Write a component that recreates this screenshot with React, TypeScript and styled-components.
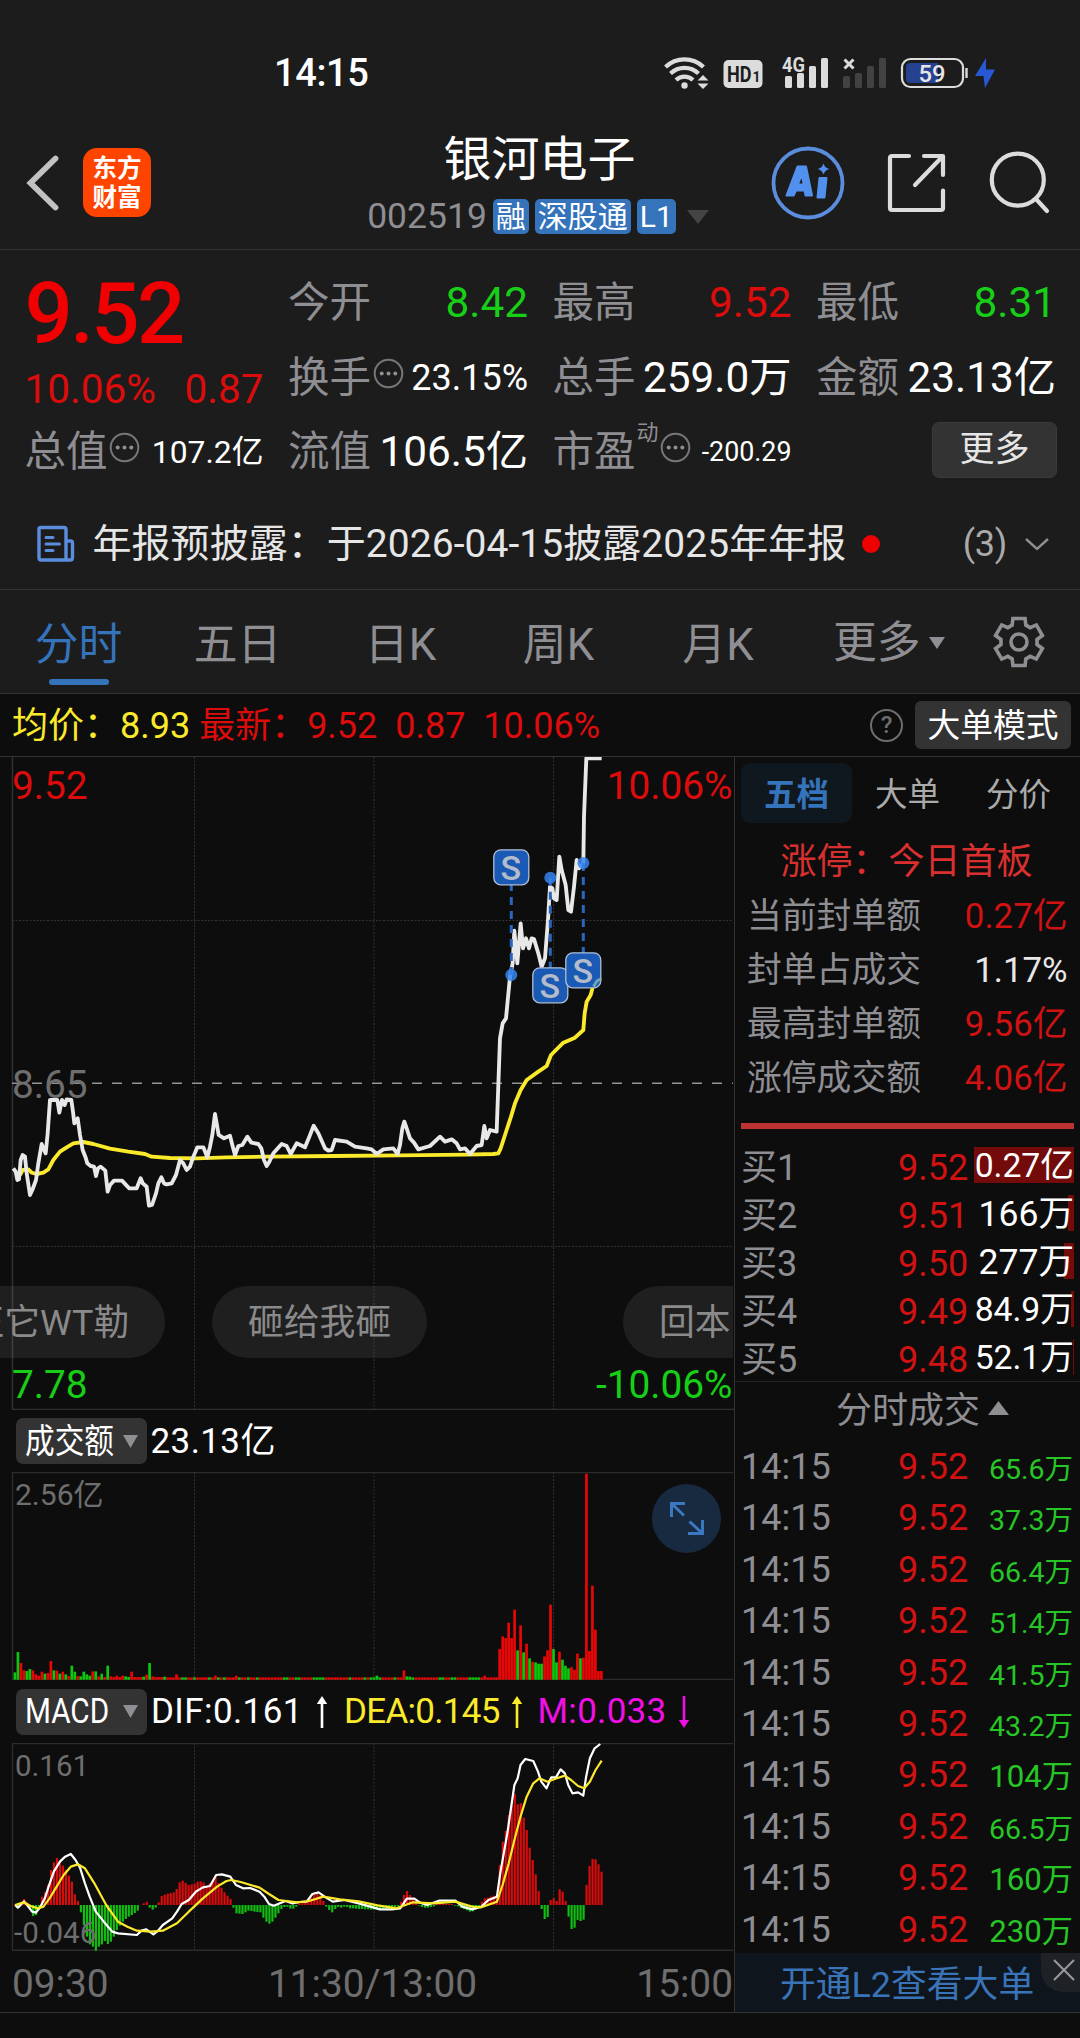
import React from 'react';
import styled, { createGlobalStyle, css } from 'styled-components';

const color = {
  panel: '#1c1c1c',
  page: '#0d0d0d',
  line: '#333333',
  grey: '#8e8e93',
  dim: '#6e6e6e',
  red: '#dc0c0c',
  green: '#17cf17',
  blue: '#3573bb',
  yellow: '#fbea2b',
  magenta: '#f010e4',
};

const GlobalStyle = createGlobalStyle`
  * { box-sizing: border-box; }
  body {
    margin: 0;
    background: ${color.page};
    color: #fff;
    font-family: Roboto, "Noto Sans CJK SC", sans-serif;
    -webkit-font-smoothing: antialiased;
  }
`;

const Screen = styled.div`
  width: 1080px;
  height: 2038px;
  overflow: hidden;
  background: ${color.page};
`;

/* ---------- status bar and header ---------- */

const StatusBar = styled.div`
  display: flex;
  align-items: center;
  justify-content: space-between;
  height: 110px;
  padding: 35px 84px 0 274px;
  background: ${color.panel};
`;
const Clock = styled.div`
  font-size: 38px;
  line-height: 40px;
  font-weight: 500;
  letter-spacing: -0.4px;
`;

const Header = styled.header`
  display: grid;
  grid-template-columns: 360px 1fr 360px;
  height: 140px;
  padding-bottom: 1px;
  background: ${color.panel};
  border-bottom: 1px solid ${color.line};
`;
const HeaderSide = styled.div<{ $end?: boolean }>`
  display: flex;
  align-items: center;
  height: 145px;
  ${(p) => (p.$end ? 'padding-left: 50px; gap: 40px;' : 'padding-left: 25px; gap: 22px;')}
`;
const AppLogo = styled.div`
  display: grid;
  place-content: center;
  width: 68px;
  height: 69px;
  border-radius: 14px;
  background: #ff4400;
  font-size: 24.5px;
  line-height: 29px;
  font-weight: 700;
`;
const TitleBlock = styled.div`
  display: flex;
  flex-direction: column;
  align-items: center;
  padding-top: 22px;
`;
const StockName = styled.h1`
  margin: 0 1px 0 0;
  font-size: 48px;
  line-height: 56px;
  font-weight: 400;
`;
const CodeLine = styled.div`
  display: flex;
  align-items: center;
  gap: 6px;
  margin: 10px 0 0 -4px;
  height: 37px;
  svg {
    margin-left: 5px;
  }
`;
const Code = styled.span`
  font-size: 35.5px;
  line-height: 37px;
  color: ${color.grey};
`;
const Badge = styled.span`
  height: 35px;
  padding: 0 3px;
  border-radius: 5px;
  background: ${color.blue};
  font-size: 30px;
  line-height: 36px;
`;

/* ---------- quote summary ---------- */

const Quote = styled.section`
  display: grid;
  grid-template-columns: 239px 240px 239px 240px;
  grid-template-rows: 75px 75px 73px;
  column-gap: 24.5px;
  height: 224px;
  padding: 15px 0 0 24.5px;
  background: ${color.panel};
`;
const PriceCell = styled.div`
  grid-row: span 2;
`;
const BigPrice = styled.div`
  font-size: 85px;
  line-height: 98px;
  font-weight: 500;
  color: #f00000;
  letter-spacing: -2.6px;
`;
const Change = styled.div`
  display: flex;
  justify-content: space-between;
  font-size: 40.5px;
  line-height: 52px;
  color: ${color.red};
`;
const Cell = styled.div`
  display: flex;
  align-items: center;
  height: 100%;
`;
const Label = styled.span`
  font-size: 41.5px;
  line-height: 60px;
  color: ${color.grey};
  sup {
    margin-left: 1px;
    font-size: 22px;
    line-height: 0;
    vertical-align: 26px;
  }
`;
const Value = styled.span<{ $size?: number; $tone?: string }>`
  margin-left: auto;
  font-size: ${(p) => p.$size ?? 42.3}px;
  line-height: 60px;
  color: ${(p) => p.$tone ?? '#fff'};
  white-space: nowrap;
`;
const MoreButton = styled.button`
  margin: -4px -1px 0 auto;
  width: 125px;
  height: 56px;
  padding: 0;
  border: 1px solid #3a3a3a;
  border-radius: 7px;
  background: #333;
  color: #e6e6e6;
  font: 35px/54px Roboto, 'Noto Sans CJK SC', sans-serif;
`;

const News = styled.section`
  display: flex;
  align-items: center;
  height: 116px;
  padding: 24px 30px 0 35.5px;
  background: ${color.panel};
  border-bottom: 1px solid ${color.line};
  color: #e6e6e6;
  font-size: 39px;
  line-height: 62px;
  white-space: nowrap;
`;
const NewsText = styled.span`
  margin-left: 18px;
  letter-spacing: 0.05px;
`;
const UnreadDot = styled.i`
  width: 18px;
  height: 18px;
  margin-left: 16px;
  border-radius: 50%;
  background: #f00000;
`;
const Count = styled.span`
  margin: 0 17px 0 auto;
  font-size: 36px;
  letter-spacing: -0.3px;
  color: #aaa;
`;

/* ---------- period tabs ---------- */

const Tabs = styled.nav`
  display: flex;
  height: 104px;
  background: ${color.panel};
  border-bottom: 1px solid ${color.line};
`;
const Tab = styled.div<{ $w: number; $active?: boolean }>`
  display: flex;
  flex-direction: column;
  align-items: center;
  width: ${(p) => p.$w}px;
  padding-top: 25px;
  padding-right: 1px;
  font-size: 43.8px;
  line-height: 60px;
  color: ${(p) => (p.$active ? color.blue : color.grey)};
  ${(p) =>
    p.$active &&
    css`
      &::after {
        content: '';
        width: 60px;
        height: 6px;
        margin: 4px 0 0 1px;
        border-radius: 3px;
        background: ${color.blue};
      }
    `}
`;
const MoreTab = styled.div`
  display: flex;
  align-items: center;
  gap: 8px;
  width: 189px;
  padding: 2px 0 0 30px;
  font-size: 43.8px;
  line-height: 62px;
  color: ${color.grey};
`;
const GearBox = styled.div`
  display: flex;
  align-items: center;
`;

/* ---------- average / latest strip ---------- */

const InfoStrip = styled.div`
  display: flex;
  align-items: center;
  height: 63px;
  padding: 0 9px 0 12px;
  border-bottom: 1px solid ${color.line};
  font-size: 36px;
  line-height: 60px;
  white-space: pre;
  color: ${color.red};
  b {
    font-weight: 400;
    color: ${color.yellow};
  }
  > b,
  > b + span {
    padding-top: 2px;
  }
`;
const HelpIcon = styled.span`
  display: grid;
  place-items: center;
  width: 33px;
  height: 33px;
  margin-left: auto;
  border: 2.5px solid ${color.dim};
  border-radius: 50%;
  color: ${color.dim};
  font-size: 24px;
  line-height: 28px;
  font-weight: 500;
`;
const ModeButton = styled.span`
  width: 156px;
  height: 48px;
  margin-left: 12px;
  border-radius: 6px;
  background: #333;
  color: #fff;
  font-size: 32.8px;
  line-height: 50px;
  text-align: center;
`;

/* ---------- main area ---------- */

const Main = styled.main`
  display: grid;
  grid-template-columns: 734px 346px;
  height: 1256px;
  border-bottom: 1px solid ${color.line};
`;
const Charts = styled.div`
  display: flex;
  flex-direction: column;
`;
const Plot = styled.div<{ $h: number }>`
  position: relative;
  height: ${(p) => p.$h}px;
  overflow: hidden;
  svg {
    display: block;
  }
`;
const ScaleLabel = styled.span<{ $size: number; $tone: string }>`
  position: absolute;
  font-size: ${(p) => p.$size}px;
  line-height: 44px;
  color: ${(p) => p.$tone};
`;
const TopLeft = styled(ScaleLabel)`
  left: ${(p) => (p.$size > 31 ? 12 : 15)}px;
  top: ${(p) => (p.$size > 31 ? 7 : 1)}px;
`;
const TopRight = styled(ScaleLabel)`
  right: 1.5px;
  top: 7px;
`;
const Middle = styled(ScaleLabel)`
  left: 12px;
  top: 306px;
`;
const BottomLeft = styled(ScaleLabel)`
  left: ${(p) => (p.$size > 31 ? 12 : 14)}px;
  bottom: ${(p) => (p.$size > 31 ? 3 : -4)}px;
`;
const BottomRight = styled(ScaleLabel)`
  right: 1.5px;
  bottom: 3px;
`;
const Bullet = styled.span<{ $x: number }>`
  position: absolute;
  top: 529px;
  left: ${(p) => p.$x}px;
  height: 72px;
  padding: 0 36px;
  border-radius: 36px;
  background: rgba(255, 255, 255, 0.075);
  color: #8a8a8a;
  font-size: 35.8px;
  line-height: 74px;
  white-space: nowrap;
`;
const BulletLayer = styled.div`
  position: absolute;
  inset: 0 1px 0 0;
  overflow: hidden;
`;
const ExpandButton = styled.div`
  position: absolute;
  right: 13px;
  top: 12px;
  width: 69px;
  height: 69px;
  border-radius: 50%;
  background: #182a40;
`;

const IndicatorRow = styled.div<{ $h: number }>`
  display: flex;
  align-items: center;
  height: ${(p) => p.$h}px;
  padding-left: 15.5px;
  font-size: 35px;
  line-height: 47px;
  white-space: nowrap;
  svg {
    flex: none;
  }
`;
const Picker = styled.div`
  display: flex;
  align-items: center;
  justify-content: space-between;
  width: 131px;
  height: 46px;
  padding: 0 9px 0 9px;
  border-radius: 7px;
  background: #333;
`;
const PickerText = styled.span`
  width: 88px;
  font-size: 34.5px;
  transform: scaleX(0.86);
  transform-origin: 0 50%;
`;
const Reading = styled.span<{ $tone?: string; $w: number; $pad?: number; $ls?: number }>`
  width: ${(p) => p.$w}px;
  padding-left: ${(p) => p.$pad ?? 4}px;
  color: ${(p) => p.$tone ?? '#fff'};
  letter-spacing: ${(p) => p.$ls ?? 0}px;
`;
const TimeAxis = styled.div`
  display: flex;
  justify-content: space-between;
  height: 61px;
  padding: 8px 1px 0 12px;
  font-size: 38.8px;
  line-height: 50px;
  color: ${color.dim};
`;

/* ---------- order book column ---------- */

const Side = styled.aside`
  display: flex;
  flex-direction: column;
  border-left: 1px solid ${color.line};
`;
const BookTabs = styled.div`
  display: flex;
  margin: 6px 0 0 6px;
`;
const BookTab = styled.span<{ $active?: boolean }>`
  width: 111px;
  height: 60px;
  border-radius: 9px;
  text-align: center;
  font-size: 32.5px;
  line-height: 64px;
  color: #aaa;
  ${(p) =>
    p.$active &&
    css`
      background: #10181f;
      color: ${color.blue};
      font-weight: 700;
    `}
`;
const LimitTitle = styled.div`
  height: 66px;
  padding-left: 45.5px;
  font-size: 36px;
  line-height: 79px;
  color: #d9302f;
`;
const LimitRow = styled.div<{ $tone: string }>`
  display: flex;
  justify-content: space-between;
  height: 54px;
  padding: 0 12.5px 0 12px;
  font-size: 34.8px;
  line-height: 54px;
  color: ${color.grey};
  em {
    font-style: normal;
    color: ${(p) => p.$tone};
  }
`;
const RedRule = styled.div`
  flex: none;
  height: 6px;
  margin: 18px 6px 15px;
  background: #bd3333;
`;
const BookRow = styled.div`
  display: grid;
  grid-template-columns: 137px 96px 100px;
  height: 48px;
  margin-left: 6px;
  font-size: 36px;
  line-height: 49px;
  color: ${color.grey};
`;
const Price = styled.span`
  padding-left: 20px;
  color: #d01212;
`;
const Lots = styled.span<{ $size: number; $bar: number }>`
  height: 36px;
  margin: 3px 0 0 -1px;
  text-align: right;
  font-size: ${(p) => p.$size}px;
  line-height: 38px;
  white-space: nowrap;
  color: #fff;
  background: linear-gradient(#730b0b, #730b0b) right / ${(p) => p.$bar}px 100% no-repeat;
`;
const TradesTitle = styled.div`
  display: flex;
  align-items: center;
  gap: 8px;
  flex: none;
  height: 62px;
  margin-top: -3px;
  padding: 0 0 3px 101px;
  border-top: 1px solid #262626;
  font-size: 36px;
  line-height: 48px;
  color: ${color.grey};
  svg {
    margin-bottom: 6px;
  }
`;
const TradeRow = styled.div`
  display: grid;
  grid-template-columns: 137px 96px 99px;
  flex: none;
  height: 51.4px;
  margin-left: 6px;
  font-size: 36px;
  line-height: 48px;
  color: ${color.grey};
`;
const TradeVol = styled.span<{ $size: number }>`
  font-size: ${(p) => p.$size}px;
  line-height: ${(p) => (p.$size < 30 ? 53 : 51)}px;
  text-align: right;
  color: #26c626;
`;
const Promo = styled.div`
  position: relative;
  flex: none;
  height: 59px;
  margin-top: -4px;
  padding-left: 45px;
  background: #0f151c;
  color: #3a74b8;
  font-size: 35.8px;
  line-height: 64px;
`;
const PromoClose = styled.span`
  position: absolute;
  top: 0;
  right: 0;
  display: grid;
  place-items: center;
  width: 39px;
  height: 39px;
  padding: 0 0 5px 6px;
  border-radius: 0 0 0 22px;
  background: #1e2226;
`;

/* ---------- drawings ---------- */

const StatusIcons = () => (
  <svg width="334" height="40" viewBox="662 52 334 40" fill="none">
    <g stroke="#dcdcdc" strokeWidth="4.2">
      <path d="M665.5 66 A27.5 27.5 0 0 1 703.5 66" />
      <path d="M670.5 72.5 A20 20 0 0 1 698.5 72.5" />
      <path d="M676 79 A12.5 12.5 0 0 1 693 79" />
    </g>
    <circle cx="684.5" cy="84.5" r="3.2" fill="#dcdcdc" />
    <path d="M697.5 79.5 L703 74 L708.5 79.5Z M697.5 82.5 L703 88 L708.5 82.5Z" fill="#dcdcdc" />
    <rect x="723.5" y="59" width="39" height="28" rx="5" fill="#dcdcdc" />
    <text x="727" y="81" fontSize="22" fontWeight="700" fill="#1c1c1c" textLength="24.5" lengthAdjust="spacingAndGlyphs">HD</text>
    <text x="752.5" y="81" fontSize="14" fontWeight="700" fill="#1c1c1c">1</text>
    <text x="782" y="70.5" fontSize="20" fontWeight="700" fill="#dcdcdc" textLength="23" lengthAdjust="spacingAndGlyphs">4G</text>
    <g fill="#dcdcdc">
      <rect x="785" y="75" width="7" height="12" rx="1.5" />
      <rect x="797" y="72" width="7" height="15" rx="1.5" />
      <rect x="809" y="65" width="7" height="22" rx="1.5" />
      <rect x="821" y="57" width="7" height="30" rx="1.5" />
    </g>
    <path d="M844.5 58.5 L853.5 67.5 M853.5 58.5 L844.5 67.5" stroke="#dcdcdc" strokeWidth="3" />
    <g fill="#424242">
      <rect x="843" y="75" width="7" height="12" rx="1.5" />
      <rect x="855" y="72" width="7" height="15" rx="1.5" />
      <rect x="867" y="65" width="7" height="22" rx="1.5" />
      <rect x="879" y="57" width="7" height="30" rx="1.5" />
    </g>
    <rect x="902" y="58" width="61" height="28" rx="8.5" stroke="#dcdcdc" strokeWidth="2.2" />
    <path d="M910 62 H938 V82 H910 Q906 82 906 78 V66 Q906 62 910 62Z" fill="#25418f" />
    <path d="M966.5 67 V77" stroke="#dcdcdc" strokeWidth="2.4" />
    <text x="918.5" y="81" fontSize="24" fontWeight="500" fill="#e6e6e6" textLength="27" lengthAdjust="spacingAndGlyphs">59</text>
    <path d="M986 57 L975 75 H983.5 L985 87 L995 68.5 H986Z" fill="#2858d6" />
  </svg>
);

const BackIcon = () => (
  <svg width="36" height="58" fill="none" stroke="#c2c2c2" strokeWidth="5.8" strokeLinecap="round">
    <path d="M30.5 4.5 L5.5 29 L30.5 53.5" strokeLinejoin="miter" />
  </svg>
);

const AiIcon = () => (
  <svg width="76" height="76" viewBox="0 0 76 76" fill="none">
    <circle cx="38" cy="38" r="34.5" stroke="#5a8ddd" strokeWidth="3.8" />
    <path
      fillRule="evenodd"
      fill="#5290ee"
      stroke="#5290ee"
      strokeWidth="2"
      strokeLinejoin="round"
      d="M27.5 21.5 H36 L42 50.5 H35.5 L34.6 45.5 H26 L23.6 50.5 H16.5Z M31.6 29.5 L28 39.5 H33.8Z"
    />
    <path d="M49.5 33 H56.5 L54.5 52.5 H47.5Z" fill="#5290ee" stroke="#5290ee" strokeWidth="2" strokeLinejoin="round" />
    <path d="M53.5 18.5 Q55 23 59.3 24 Q55 25 53.5 29.5 Q52 25 47.7 24 Q52 23 53.5 18.5Z" fill="#5290ee" />
  </svg>
);

const ShareIcon = () => (
  <svg width="62" height="62" viewBox="0 0 62 62" fill="none" stroke="#dcdcdc" strokeWidth="4.2" strokeLinecap="round" strokeLinejoin="round">
    <path d="M23 4 H6 Q4 4 4 6 V56 Q4 58 6 58 H55 Q57 58 57 56 V38.5" />
    <path d="M38 4 H57 V23 M56 5 L29 33" />
  </svg>
);

const SearchIcon = () => (
  <svg width="64" height="64" viewBox="0 0 64 64" fill="none" stroke="#dcdcdc" strokeWidth="4.2" strokeLinecap="round">
    <circle cx="29.8" cy="28.7" r="26" />
    <path d="M48 48 L59 60" />
  </svg>
);

const TipIcon = styled(({ className }: { className?: string }) => (
  <svg className={className} width="31" height="31" viewBox="0 0 31 31" fill="none">
    <circle cx="15.5" cy="15.5" r="13.8" stroke="#77777a" strokeWidth="2" />
    <g fill="#8e8e93">
      <circle cx="8.7" cy="15.5" r="2" />
      <circle cx="15.5" cy="15.5" r="2" />
      <circle cx="22.3" cy="15.5" r="2" />
    </g>
  </svg>
))`
  flex: none;
  margin: 0 0 9px 1.5px;
`;

const NewsIcon = () => (
  <svg width="39" height="38" viewBox="0 0 39 38" fill="none" stroke="#5a8ddd" strokeWidth="3.4" strokeLinejoin="round" strokeLinecap="round">
    <path d="M30 35 H5 Q3 35 3 33 V4 Q3 2.5 5 2.5 H28 Q30 2.5 30 4.5 V35 H34 Q36.5 35 36.5 32.5 V18 Q36.5 16 34.5 16 H30" />
    <path d="M10 12.5 H17 M10 19 H23.5 M10 25.5 H17" strokeWidth="3" />
  </svg>
);

const Triangle = ({ w, h, fill, up }: { w: number; h: number; fill: string; up?: boolean }) => (
  <svg width={w} height={h}>
    <path d={up ? `M0 ${h} L${w / 2} 0 L${w} ${h}Z` : `M0 0 H${w} L${w / 2} ${h}Z`} fill={fill} />
  </svg>
);

const gearPath = (() => {
  const teeth = 6;
  const pts: string[] = [];
  for (let i = 0; i < teeth; i++) {
    const a = (i * 360) / teeth - 90;
    [
      [-22, 18.2],
      [-14.5, 24.3],
      [14.5, 24.3],
      [22, 18.2],
    ].forEach(([d, r]) => {
      const t = ((a + d) * Math.PI) / 180;
      pts.push(`${(27 + r * Math.cos(t)).toFixed(2)} ${(27 + r * Math.sin(t)).toFixed(2)}`);
    });
  }
  return `M${pts.join(' L')}Z`;
})();

const GearIcon = () => (
  <svg width="54" height="54" fill="none" stroke={color.grey} strokeWidth="3.6" strokeLinejoin="miter">
    <path d={gearPath} />
    <circle cx="27" cy="27" r="8" />
  </svg>
);

const TrendArrow = ({ fill, down }: { fill: string; down?: boolean }) => (
  <svg width="12" height="32" viewBox="0 0 12 32">
    <g transform={down ? 'rotate(180 6 16)' : undefined}>
      <path d="M6 4 V32" stroke={fill} strokeWidth="2.6" />
      <path d="M0.8 8 L6 0 L11.2 8Z" fill={fill} />
    </g>
  </svg>
);

/* ---------- chart data ---------- */

const GRID_X = [194.5, 374, 553.5];
const STEP = 2.992;
const barX = (i: number) => 15.1 + STEP * i;

const priceLine =
  '40,385 47,395 52,420 57,418 62,360 68,345 75,350 80,400 90,465 97,450 108,420 115,370 125,312 130,325 137,340 143,280 150,180 172,180 178,218 186,180 194,195 200,178 214,180 219,215 223,250 233,235 240,285 248,330 256,350 262,370 272,378 282,380 288,408 294,385 302,380 316,392 323,455 330,435 342,422 366,422 380,437 388,445 410,445 422,415 428,430 440,440 447,497 456,495 468,460 475,430 484,412 492,430 500,433 515,430 528,405 540,360 550,370 560,390 570,380 580,350 592,322 610,322 622,352 630,320 637,285 645,222 650,250 656,285 672,295 690,287 697,315 705,345 715,318 727,315 742,290 754,308 775,312 784,325 792,360 800,378 808,365 820,340 845,312 860,318 872,342 890,310 915,322 928,290 941,257 955,280 975,325 985,332 995,330 1005,300 1040,305 1065,320 1100,325 1115,328 1130,342 1150,328 1180,325 1193,342 1200,315 1207,265 1213,245 1220,265 1230,295 1242,308 1255,328 1290,318 1320,290 1335,305 1355,298 1370,310 1380,328 1395,325 1410,342 1430,318 1445,315 1453,258 1460,295 1470,270 1490,275 1500,-5 1508,-50 1518,-65 1530,-190 1538,-230 1543,-328 1552,-230 1562,-350 1569,-275 1578,-305 1587,-275 1595,-305 1602,-303 1615,-260 1625,-220 1635,-245 1644,-360 1650,-460 1657,-455 1662,-425 1670,-420 1678,-550 1685,-510 1697,-465 1705,-390 1713,-385 1722,-460 1730,-540 1737,-515 1750,-530 1752,-670 1759,-845 1805,-845';
const averageLine =
  '60,405 68,390 85,388 95,398 110,402 130,398 145,388 160,360 180,335 200,322 220,310 250,306 280,312 330,326 385,335 435,342 455,350 510,354 590,355 680,352 800,350 1000,348 1200,346 1400,344 1480,342 1495,340 1502,325 1515,285 1533,230 1545,190 1562,150 1580,120 1615,95 1640,78 1653,45 1690,8 1725,-7 1750,-30 1754,-80 1760,-115 1772,-135 1780,-165 1790,-180 1803,-185';
const difLine =
  '32,645 38,653 51,634 60,650 68,665 76,668 85,652 95,625 103,590 114,545 127,515 138,500 150,492 160,510 170,535 180,580 190,620 203,665 220,695 238,725 250,730 290,735 300,722 310,718 325,733 335,722 345,705 365,685 375,665 385,642 400,630 415,605 430,592 445,588 458,555 470,553 488,560 500,585 515,595 530,594 550,605 560,620 570,642 580,647 605,633 620,640 635,636 650,635 662,612 675,607 690,622 705,635 730,630 760,640 785,650 805,658 830,658 848,655 862,626 878,626 890,638 905,645 930,632 965,632 980,650 1000,658 1020,650 1035,630 1053,620 1060,550 1075,430 1090,285 1097,265 1103,225 1113,207 1130,213 1140,245 1147,275 1158,295 1168,262 1178,262 1188,238 1197,250 1204,285 1213,310 1225,307 1236,317 1242,260 1250,205 1260,175 1272,162';
const deaLine =
  '32,645 50,637 65,648 80,655 92,650 105,625 120,590 135,555 150,530 165,523 180,535 200,580 225,645 250,695 270,710 290,722 320,725 345,722 375,700 400,665 430,625 460,590 480,573 490,570 510,576 550,593 570,612 590,630 630,637 655,633 685,620 720,628 760,634 800,646 840,655 875,637 920,640 965,635 1000,650 1020,652 1053,635 1065,585 1078,520 1090,450 1103,380 1116,320 1130,280 1143,265 1160,275 1180,265 1197,257 1210,270 1225,288 1238,295 1250,275 1262,240 1275,212';

const openingVolume =
  '22g 83g 50r 28r 26g 32g 28r 16r 12r 24r 18g 20r 56r 28g 27r 18g 24r 16g 11r 42g 24g 11r 10g 24g 16g 12g 25r 25g 10r 18g 8r 42g 10r 8r 12r 8r 12r 10g 8g 24r 8r 8r 8r 9g 15r 50g 10r 8r 8r 8r 9g 7r 7r 7r 16r 7r 7g 7g'.split(' ');
const closingVolume =
  '92r 130r 125r 171r 125r 210r 88g 163r 82g 108r 64g 54r 52g 48g 48g 70r 88r 225r 92g 52g 84r 60g 42g 34g 38r 30r 78r 64g 66r 618r 86r 282r 150r 26r 26r'.split(' ');
const quietTones = 'rrrrrrrrgrrrrgrggrgrrrrgrrgrrgrrrrrrrrggrrggrrrrgggg'.split('');
const spikes: Record<number, string> = { 67: '12r', 74: '12r', 121: '12g', 130: '28r', 131: '10g', 132: '9g', 157: '12r' };
const volume = Array.from({ length: 197 }, (_, i) => {
  if (i < openingVolume.length) return openingVolume[i];
  if (i >= 162) return closingVolume[i - 162];
  return spikes[i] ?? `7${quietTones[i % quietTones.length]}`;
}).map((s) => ({ h: parseInt(s, 10) / 3, up: s.endsWith('r') }));

const macdBars = [
  2, -6, 4, 18, 8, -12, -33, -30, -12, 25, 38, 60, 105, 128, 141, 125, 118, 105, 88, 70, 32, 12, -22, -60, -95, -118, -125,
  -137, -125, -118, -108, -117, -110, -95, -75, -62, -50, -42, -35, -30, -24, -17, 0, 5, 10, -8, -14, -8, 8, 27, 31, 34, 36,
  38, 48, 68, 73, 66, 60, 62, 64, 70, 71, 68, 55, 65, 72, 88, 66, 52, 38, 28, 18, -8, -25, -26, -27, -22, -17, -18, -20,
  -21, -22, -38, -50, -56, -50, -38, -25, -12, -6, -5, -11, -11, -5, 4, 6, 8, 12, 22, 30, 35, 28, 12, -5, -15, -22, -12,
  -6, -8, -5, -6, -10, -10, -11, -12, -12, -13, -13, -14, -14, -14, -12, -10, -10, -8, -7, -6, -3, 10, 30, 42, 30, 20, 12,
  -2, -6, -8, -8, -6, -4, 3, 4, 4, 3, 3, 3, -2, -4, -9, -12, -16, -20, -19, -14, -4, 10, 20, 22, 25, 28, 28, 120, 190, 222,
  270, 300, 333, 302, 305, 262, 225, 172, 135, 92, 42, -12, -42, -36, 15, 20, 12, 47, 40, 12, -35, -72, -68, -45, -48, -44,
  60, 117, 138, 137, 122, 100,
];

const GridColumns = ({ h }: { h: number }) => (
  <>
    {GRID_X.map((x) => (
      <path key={x} d={`M${x} 0 V${h}`} stroke="#323232" strokeWidth="1" strokeDasharray="2 1.5" />
    ))}
  </>
);

const markers = [
  { x: 511.3, dot: 218, badge: 110 },
  { x: 550.3, dot: 120.7, badge: 228 },
  { x: 583.3, dot: 106, badge: 213 },
];

const PricePlot = () => (
  <svg width="734" height="653" fill="none">
    <path d="M12.5 0 V652 M12 652.5 H734" stroke="#303030" strokeWidth="1.6" />
    <GridColumns h={652} />
    <path d="M12 163.5 H733 M12 489.5 H733" stroke="#323232" strokeDasharray="2 1.5" />
    <path d="M12 326.3 H733" stroke="#949494" strokeWidth="1.5" strokeDasharray="10 10" />
    <g transform="translate(0 283) scale(0.33333)" strokeLinejoin="round">
      <polyline points={averageLine} stroke={color.yellow} strokeWidth="11.5" />
      <polyline points={priceLine} stroke="#e8e8e8" strokeWidth="11.5" />
    </g>
    {markers.map((m) => (
      <g key={m.x}>
        <path d={`M${m.x} ${m.dot} V${m.badge}`} stroke="#2a66bd" strokeWidth="3" strokeDasharray="8 6" />
        <circle cx={m.x} cy={m.dot} r="6" fill="#3585f0" fillOpacity="0.85" />
      </g>
    ))}
    {markers.map((m) => (
      <g key={m.x}>
        <rect x={m.x - 17.5} y={m.badge - 17.2} width="35" height="35" rx="7" fill="#1a5ab4" stroke="#aebfd6" strokeWidth="1.3" />
        <text x={m.x - 0.5} y={m.badge + 12.5} fontSize="34" fontWeight="500" fill="#b4bccb" textAnchor="middle">
          S
        </text>
      </g>
    ))}
    <path d="M593.5 229.5 L597 224 L600.5 222" stroke="#6fa8b4" strokeWidth="3" />
  </svg>
);

const VolumePlot = () => (
  <svg width="734" height="208">
    <path d="M12 0.5 H733 M12.5 0 V208 M12 207.5 H733" stroke="#2c2c2c" strokeWidth="1.4" />
    <GridColumns h={207} />
    {volume.map((b, i) => (
      <rect key={i} x={barX(i) - 1.5} y={207.7 - b.h} width="2.7" height={b.h} fill={b.up ? '#e80606' : '#0cc80c'} />
    ))}
  </svg>
);

const MacdPlot = () => (
  <svg width="734" height="208" fill="none">
    <path d="M12 0.5 H733 M12.5 0 V208 M12 207.3 H733" stroke="#2c2c2c" strokeWidth="1.4" />
    <GridColumns h={207} />
    {macdBars.map((v, i) => (
      <rect
        key={i}
        x={barX(i) - 1.1}
        y={162 - Math.max(v, 0) / 3}
        width="2.2"
        height={Math.abs(v) / 3}
        fill={v > 0 ? '#d80c0c' : '#12bc12'}
      />
    ))}
    <g transform="translate(0 -53) scale(0.47192 0.33333)" strokeLinejoin="round">
      <polyline points={difLine} stroke="#fff" strokeWidth="2.2" vectorEffect="non-scaling-stroke" />
      <polyline points={deaLine} stroke={color.yellow} strokeWidth="2.2" vectorEffect="non-scaling-stroke" />
    </g>
  </svg>
);

/* ---------- page ---------- */

const bids = [
  { n: 1, price: '9.52', lots: '0.27亿', size: 33.7, bar: 100 },
  { n: 2, price: '9.51', lots: '166万', size: 35.6, bar: 6 },
  { n: 3, price: '9.50', lots: '277万', size: 35.6, bar: 10 },
  { n: 4, price: '9.49', lots: '84.9万', size: 33.7, bar: 3 },
  { n: 5, price: '9.48', lots: '52.1万', size: 33.7, bar: 1 },
];
const trades = ['65.6万', '37.3万', '66.4万', '51.4万', '41.5万', '43.2万', '104万', '66.5万', '160万', '230万'];
const limitRows = [
  ['当前封单额', '0.27亿', '#d01212'],
  ['封单占成交', '1.17%', '#e8e8e8'],
  ['最高封单额', '9.56亿', '#d01212'],
  ['涨停成交额', '4.06亿', '#d01212'],
];

export default function App() {
  return (
    <Screen>
      <GlobalStyle />
      <StatusBar>
        <Clock>14:15</Clock>
        <StatusIcons />
      </StatusBar>
      <Header>
        <HeaderSide>
          <BackIcon />
          <AppLogo>
            <span>东方</span>
            <span>财富</span>
          </AppLogo>
        </HeaderSide>
        <TitleBlock>
          <StockName>银河电子</StockName>
          <CodeLine>
            <Code>002519</Code>
            <Badge>融</Badge>
            <Badge>深股通</Badge>
            <Badge>L1</Badge>
            <Triangle w={22} h={14} fill="#444" />
          </CodeLine>
        </TitleBlock>
        <HeaderSide $end>
          <AiIcon />
          <ShareIcon />
          <SearchIcon />
        </HeaderSide>
      </Header>

      <Quote>
        <PriceCell>
          <BigPrice>9.52</BigPrice>
          <Change>
            <span>10.06%</span>
            <span>0.87</span>
          </Change>
        </PriceCell>
        <Cell>
          <Label>今开</Label>
          <Value $tone={color.green}>8.42</Value>
        </Cell>
        <Cell>
          <Label>最高</Label>
          <Value $tone={color.red}>9.52</Value>
        </Cell>
        <Cell>
          <Label>最低</Label>
          <Value $tone={color.green}>8.31</Value>
        </Cell>
        <Cell>
          <Label>换手</Label>
          <TipIcon />
          <Value $size={36}>23.15%</Value>
        </Cell>
        <Cell>
          <Label>总手</Label>
          <Value>259.0万</Value>
        </Cell>
        <Cell>
          <Label>金额</Label>
          <Value>23.13亿</Value>
        </Cell>
        <Cell>
          <Label>总值</Label>
          <TipIcon />
          <Value $size={31.8}>107.2亿</Value>
        </Cell>
        <Cell>
          <Label>流值</Label>
          <Value>106.5亿</Value>
        </Cell>
        <Cell>
          <Label>
            市盈<sup>动</sup>
          </Label>
          <TipIcon />
          <Value $size={26.8}>-200.29</Value>
        </Cell>
        <Cell>
          <MoreButton>更多</MoreButton>
        </Cell>
      </Quote>

      <News>
        <NewsIcon />
        <NewsText>年报预披露：于2026-04-15披露2025年年报</NewsText>
        <UnreadDot />
        <Count>(3)</Count>
        <svg width="26" height="14" fill="none" stroke="#8e8e8e" strokeWidth="2.4">
          <path d="M2 2 L13 12 L24 2" />
        </svg>
      </News>

      <Tabs>
        <Tab $w={158} $active>
          分时
        </Tab>
        <Tab $w={160}>五日</Tab>
        <Tab $w={166}>日K</Tab>
        <Tab $w={150}>周K</Tab>
        <Tab $w={169}>月K</Tab>
        <MoreTab>
          更多
          <Triangle w={16} h={12} fill={color.grey} />
        </MoreTab>
        <GearBox>
          <GearIcon />
        </GearBox>
      </Tabs>

      <InfoStrip>
        <b>均价：8.93 </b>
        <span>最新：9.52  0.87  10.06%</span>
        <HelpIcon>?</HelpIcon>
        <ModeButton>大单模式</ModeButton>
      </InfoStrip>

      <Main>
        <Charts>
          <Plot $h={653}>
            <PricePlot />
            <TopLeft $size={38.8} $tone={color.red}>9.52</TopLeft>
            <TopRight $size={38.8} $tone={color.red}>10.06%</TopRight>
            <Middle $size={38.8} $tone={color.dim}>8.65</Middle>
            <BottomLeft $size={38.8} $tone={color.green}>7.78</BottomLeft>
            <BottomRight $size={38.8} $tone={color.green}>-10.06%</BottomRight>
            <BulletLayer>
              <Bullet $x={-67.5}>正它WT勒</Bullet>
              <Bullet $x={212}>砸给我砸</Bullet>
              <Bullet $x={623}>回本</Bullet>
            </BulletLayer>
          </Plot>
          <IndicatorRow $h={62}>
            <Picker>
              <PickerText>成交额</PickerText>
              <Triangle w={15} h={13} fill={color.grey} />
            </Picker>
            <Reading $w={140} $ls={0.4}>23.13亿</Reading>
          </IndicatorRow>
          <Plot $h={208}>
            <VolumePlot />
            <TopLeft $size={30} $tone={color.dim}>2.56亿</TopLeft>
            <ExpandButton>
              <svg width="69" height="69" fill="none" stroke="#3a78c2" strokeWidth="3">
                <path d="M19.5 33 V19.5 H33 M20 20 L32 31.5 M50.5 36 V49.5 H36 M50 49 L37.5 37.5" />
              </svg>
            </ExpandButton>
          </Plot>
          <IndicatorRow $h={63}>
            <Picker>
              <PickerText>MACD</PickerText>
              <Triangle w={15} h={13} fill={color.grey} />
            </Picker>
            <Reading $w={169.5} $pad={4.5} $ls={0.4}>DIF:0.161</Reading>
            <TrendArrow fill="#fff" />
            <Reading $w={183} $pad={16} $ls={-0.7} $tone={color.yellow}>DEA:0.145</Reading>
            <TrendArrow fill={color.yellow} />
            <Reading $w={155} $pad={14.5} $ls={0.3} $tone={color.magenta}>M:0.033</Reading>
            <TrendArrow fill={color.magenta} down />
          </IndicatorRow>
          <Plot $h={208}>
            <MacdPlot />
            <TopLeft $size={29.5} $tone={color.dim}>0.161</TopLeft>
            <BottomLeft $size={29.5} $tone={color.dim}>-0.046</BottomLeft>
          </Plot>
          <TimeAxis>
            <span>09:30</span>
            <span>11:30/13:00</span>
            <span>15:00</span>
          </TimeAxis>
        </Charts>

        <Side>
          <BookTabs>
            <BookTab $active>五档</BookTab>
            <BookTab>大单</BookTab>
            <BookTab>分价</BookTab>
          </BookTabs>
          <LimitTitle>涨停：今日首板</LimitTitle>
          {limitRows.map(([label, value, tone]) => (
            <LimitRow key={label} $tone={tone}>
              {label}
              <em>{value}</em>
            </LimitRow>
          ))}
          <RedRule />
          {bids.map((b) => (
            <BookRow key={b.n}>
              <span>买{b.n}</span>
              <Price>{b.price}</Price>
              <Lots $size={b.size} $bar={b.bar}>
                {b.lots}
              </Lots>
            </BookRow>
          ))}
          <TradesTitle>
            分时成交
            <Triangle w={21} h={14} fill={color.grey} up />
          </TradesTitle>
          {trades.map((t) => (
            <TradeRow key={t}>
              <span>14:15</span>
              <Price>9.52</Price>
              <TradeVol $size={t.includes('.') ? 28.5 : 31.2}>{t}</TradeVol>
            </TradeRow>
          ))}
          <Promo>
            开通L2查看大单
            <PromoClose>
              <svg width="22" height="22" stroke="#9a9a9a" strokeWidth="2">
                <path d="M1 1 L21 21 M21 1 L1 21" />
              </svg>
            </PromoClose>
          </Promo>
        </Side>
      </Main>
    </Screen>
  );
}
